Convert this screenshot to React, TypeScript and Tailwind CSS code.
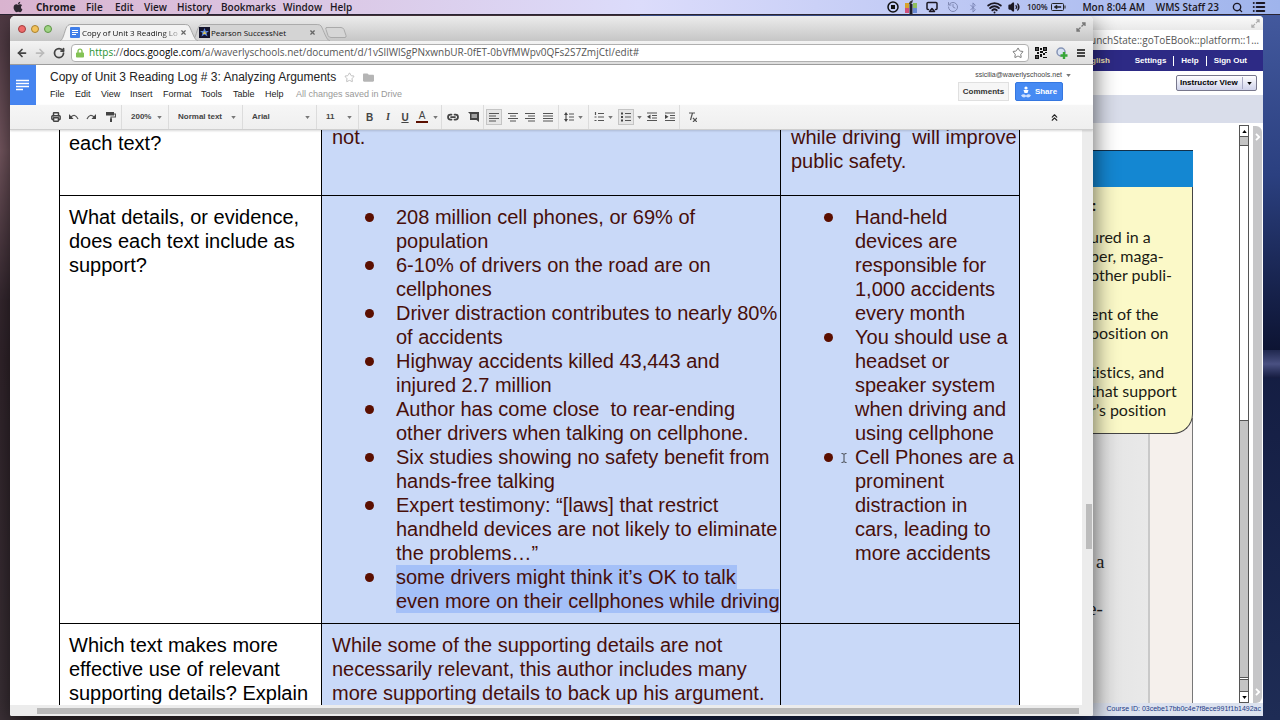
import React from "react";
import {
  Airplay,
  Bluetooth,
  History,
  List,
  Search,
  Volume2,
  Wifi,
  Star,
  Printer,
  Link2,
  ArrowLeft,
  ArrowRight,
  RotateCw,
  ChevronsUp,
  X,
} from "lucide-react";
import { FaApple, FaLock, FaFolder } from "react-icons/fa";

const SYSTEM = "font-['Open_Sans','Noto_Sans',sans-serif]";
const ARIAL = "font-['Liberation_Sans',Arial,sans-serif]";

/* ---------- menu bar ---------- */

const appMenus = [
  { name: "File", width: "w-[29px]" },
  { name: "Edit", width: "w-[29px]" },
  { name: "View", width: "w-[33px]" },
  { name: "History", width: "w-[44px]" },
  { name: "Bookmarks", width: "w-[62px]" },
  { name: "Window", width: "w-[47px]" },
  { name: "Help", width: "w-[30px]" },
];

function MenuBar() {
  return (
    <header
      className={`relative z-20 flex h-[15px] items-center border-b border-[#2a2533] bg-linear-to-r from-[#d9b3cf] via-[#dcdcfb] to-[#9fb4ec] text-[10px] font-semibold leading-[14px] text-[#1b1722] ${SYSTEM}`}
    >
      <FaApple className="ml-3 h-[12px] w-[12px] text-[#2d2730]" />
      <button className="ml-3 w-[50px] text-left font-bold">Chrome</button>
      <nav className="flex flex-1">
        {appMenus.map((m) => (
          <button key={m.name} className={`text-left ${m.width}`}>
            {m.name}
          </button>
        ))}
      </nav>
      <div className="flex items-center pr-[14px]">
        <svg viewBox="0 0 12 12" className="h-3 w-3" aria-hidden="true">
          <circle cx="6" cy="6" r="5" fill="none" stroke="#111" strokeWidth="1.5" />
          <rect x="4" y="4" width="4" height="4" fill="#111" />
        </svg>
        <svg viewBox="0 0 12 14" className="ml-[6px] h-[14px] w-3" aria-hidden="true">
          <rect x="0" y="3" width="4" height="5" fill="#d7a32e" />
          <rect x="0" y="8" width="4" height="5" fill="#d0507c" />
          <rect x="8" y="3" width="4" height="5" fill="#8fbf5e" />
          <rect x="8" y="8" width="4" height="5" fill="#6a8bd4" />
          <path d="M4.500 4h3v10h-3z" fill="#1f1f2a" />
          <path d="M4 4q0-3 4-4-.5 3-2 4z" fill="#333" />
        </svg>
        <Airplay className="ml-2 h-3 w-[14px]" strokeWidth={3} />
        <History className="ml-2 h-3 w-3 text-[#8089b4]" />
        <Bluetooth className="ml-2 h-[11px] w-3 text-[#7a83b4]" />
        <Wifi className="ml-2 h-[15px] w-[15px]" strokeWidth={3} />
        <Volume2 className="ml-[6px] h-3 w-3 fill-[#1b1722]" strokeWidth={2.500} />
        <span className="ml-[7px] w-[24px] text-[8px]">100%</span>
        <svg viewBox="0 0 15 8" className="h-2 w-[15px]" aria-hidden="true">
          <rect x=".5" y=".5" width="12" height="7" rx="1" fill="none" stroke="#222" />
          <path d="M3 4l3-2v1.500h4v1H6V6z" fill="#222" stroke="#222" strokeWidth=".5" />
          <path d="M13.500 2.500h1v3h-1z" fill="#222" />
        </svg>
        <span className="ml-2 w-[71px] whitespace-nowrap text-right">Mon 8:04 AM</span>
        <span className="ml-1 w-[70px] whitespace-nowrap text-right">WMS Staff 23</span>
        <Search className="ml-[13px] h-[11px] w-[11px]" strokeWidth={3} />
        <List className="ml-[9px] h-[14px] w-[14px]" strokeWidth={3.400} />
      </div>
    </header>
  );
}

/* ---------- small shared pieces ---------- */

function Caret({ className = "" }: { className?: string }) {
  return (
    <svg viewBox="0 0 6 4" className={`h-[3px] w-[5px] fill-[#777] ${className}`} aria-hidden="true">
      <path d="M0 0h6L3 4z" />
    </svg>
  );
}

function ExpandArrows({ className }: { className: string }) {
  return (
    <svg viewBox="0 0 10 10" className={className} fill="none" stroke="currentColor" aria-hidden="true">
      <path d="M5.500 4.500L9 1M6 1h3v3M4.500 5.500L1 9M1 6v3h3" strokeWidth="1.300" />
    </svg>
  );
}

/* ---------- e-book window ---------- */

const cardLines = [
  ["ured in a", "per, maga-", "other publi-"],
  ["ent of the", "position on"],
  ["tistics, and", "that support", "r’s position"],
];

function BookWindow() {
  return (
    <section className="absolute bottom-1 right-[17px] top-4 isolate z-0 flex w-[260px] flex-col overflow-hidden rounded-t bg-white">
      <div className="flex h-[14px] items-center justify-end bg-linear-to-b from-[#fafafa] to-[#e9e9e9] pr-[3px]">
        <ExpandArrows className="h-[9px] w-[9px] text-[#aaa]" />
      </div>
      <div className={`flex h-5 items-center justify-end pr-1 text-[10px] text-[#555] ${SYSTEM}`}>
        <span className="whitespace-nowrap">unchState::goToEBook::platform::1…</span>
      </div>
      <nav className={`flex h-[21px] items-center justify-end bg-[#2d2a85] pr-4 text-[8px] font-bold leading-[10px] text-white ${ARIAL}`}>
        <a href="#lang" className="mr-[25px] text-[#f3e5b0]">English</a>
        <a href="#settings" className="border-r border-white pr-[7px]">Settings</a>
        <a href="#help" className="border-r border-white px-[7px]">Help</a>
        <a href="#signout" className="pl-[7px]">Sign Out</a>
      </nav>
      <div className="flex h-6 items-center justify-end pr-[6px]">
        <label className={`relative flex h-4 w-[81px] items-center rounded-xs border border-[#77778c] bg-linear-to-b from-white to-[#cfd2ea] ${ARIAL}`}>
          <span className="sr-only">View</span>
          <select className="h-full w-full appearance-none pl-[3px] text-[8px] font-bold text-black outline-none">
            <option>Instructor View</option>
          </select>
          <span className="pointer-events-none absolute right-0 flex h-3 w-[14px] items-center justify-center border-l border-[#a9abc4]">
            <Caret className="fill-black" />
          </span>
        </label>
      </div>
      <div className="h-7 bg-[#d9ddea]" />
      <div className="flex min-h-0 flex-1">
        <div className="flex min-w-0 flex-1 flex-col pr-[46px] pt-[27px]">
          <div className="relative z-10 h-[37px] border-t border-[#12304a] bg-[#1487d2]" />
          <div className="relative z-10 -mb-4 h-[247px] rounded-br-[20px] border-b border-r border-[#444] bg-[#fbf9c8] pl-[87px] pt-2 font-[Lato,sans-serif] text-[16px] leading-[19px] text-[#1c1c14] [font-variant-ligatures:none]">
            <p className="h-8 pl-[2px] font-bold">:</p>
            {cardLines.map((group) => (
              <p key={group[0]} className="mb-[20px]">
                {group.map((line) => (
                  <span key={line} className="block whitespace-nowrap">{line}</span>
                ))}
              </p>
            ))}
          </div>
          <div className="flex flex-1 border-r border-[#777] bg-[#f5f0ec] pr-[42px]">
            <div className="flex-1 border-r-2 border-[#c9c9c9] bg-linear-to-r from-[#d9d9d9] to-[#e9e9e9] pl-[93px] pt-[132px] font-['Liberation_Serif',serif] text-[19px] leading-[23px] text-[#222]">
              <p>a</p>
              <p className="-ml-2 mt-6">e-</p>
            </div>
          </div>
        </div>
        <div className="mt-[2px] flex w-[10px] flex-col border border-b-0 border-[#555] bg-white">
          <button aria-label="Scroll up" className="flex h-[11px] items-center justify-center border-b border-[#555]">
            <Caret className="rotate-180 fill-black" />
          </button>
          <div className="h-[9px] border-b border-[#555] bg-[#c4c4c4]" />
          <div className="flex-1" />
          <div className="h-[258px] border-y border-[#555] bg-[#c4c4c4]" />
          <div className="mt-px h-[13px] border-y border-[#555] bg-[#c4c4c4]" />
          <button aria-label="Scroll down" className="flex h-[11px] items-center justify-center border-b border-[#555]">
            <Caret className="fill-black" />
          </button>
        </div>
        <aside className="ml-1 mr-px mt-[3px] flex w-[9px] flex-col items-center justify-between rounded-r-md bg-[#c6c6c8] py-[7px] text-white">
          {["Open panel", "Open lower panel"].map((label) => (
            <button key={label} aria-label={label}>
              <svg viewBox="0 0 6 8" className="h-2 w-[6px]" fill="none" stroke="#fff" strokeWidth="1.800" aria-hidden="true">
                <path d="M1 .8L4.200 4 1 7.200" />
              </svg>
            </button>
          ))}
        </aside>
      </div>
      <footer className={`h-[13px] whitespace-nowrap bg-[#dce2ef] pr-[2px] text-right text-[7px] leading-[11px] text-[#223a86] ${ARIAL}`}>
        Course ID: 03cebe17bb0c4e7f8ece991f1b1492ac
      </footer>
    </section>
  );
}

/* ---------- browser chrome ---------- */

function TabShape({ active }: { active: boolean }) {
  return (
    <svg viewBox="0 0 140 17" preserveAspectRatio="none" className="absolute inset-0 -z-10 h-full w-full" aria-hidden="true">
      <path
        d="M0 17C4 16 5 3 8 1.500Q9 .5 11 .5H127Q130 .5 131 2C134 7 136 16 140 17Z"
        fill={active ? "#f3f3f3" : "#d4d4d4"}
        stroke={active ? "#a6a6a6" : "#aaa"}
      />
    </svg>
  );
}

function DocsGlyph() {
  return (
    <svg viewBox="0 0 10 11" className="h-[11px] w-[10px] shrink-0" aria-hidden="true">
      <rect width="10" height="11" rx="1" fill="#3f7de8" />
      <path d="M2 3.500h6M2 5.500h6M2 7.500h4" stroke="#fff" />
    </svg>
  );
}

function TabStrip() {
  return (
    <div className={`flex h-[25px] items-end bg-linear-to-b from-[#ececec] to-[#c6c6c6] pl-2 text-[8px] text-[#111] ${SYSTEM}`}>
      <div className="mb-[8px] flex w-10 gap-[5px]">
        <button aria-label="Close window" className="size-2 rounded-full border border-[#a23c3c] bg-[#ee6a6a]" />
        <button aria-label="Minimise window" className="size-2 rounded-full border border-[#a9802e] bg-[#f3c35c]" />
        <button aria-label="Zoom window" className="size-2 rounded-full border border-[#5e9446] bg-[#9fd483]" />
      </div>
      <div className="relative isolate z-10 ml-[2px] flex h-[17px] w-[138px] items-center pl-[10px]">
        <TabShape active />
        <DocsGlyph />
        <span className="ml-[2px] w-[98px] whitespace-nowrap bg-linear-to-r from-[#111] from-80% to-[#ccc] bg-clip-text text-transparent">
          Copy of Unit 3 Reading Lo
        </span>
        <button aria-label="Close tab"><X className="h-[7px] w-[7px] text-[#666]" strokeWidth={4} /></button>
      </div>
      <div className="relative isolate -ml-[6px] flex h-[17px] w-[138px] items-center pl-[7px]">
        <TabShape active={false} />
        <svg viewBox="0 0 11 11" className="h-[11px] w-[11px] shrink-0" aria-hidden="true">
          <rect width="11" height="11" fill="#14142c" />
          <path d="M5.500 1l1.300 3H10L7.500 6l1 3.500-3-2-3 2 1-3.500L1 4h3.200z" fill="#5b83d8" />
          <path d="M5.500 4l2 3h-4z" fill="#d6c65a" />
        </svg>
        <span className="ml-[1px] w-[98px] whitespace-nowrap">Pearson SuccessNet</span>
        <button aria-label="Close tab"><X className="h-[7px] w-[7px] text-[#666]" strokeWidth={4} /></button>
      </div>
      <button aria-label="New tab" className="mb-[3px] -ml-[5px]">
        <svg viewBox="0 0 22 11" className="h-[11px] w-[22px]" aria-hidden="true">
          <path d="M1 .5h15q2 0 3 2l2 6q.5 2-1 2H6q-2 0-3-2l-2-6Q0 .5 2 .5z" fill="#d6d6d6" stroke="#aaa" />
        </svg>
      </button>
      <div className="mb-[9px] flex flex-1 justify-end pr-[7px]">
        <ExpandArrows className="h-[10px] w-[10px] text-[#777]" />
      </div>
    </div>
  );
}

function AddressBar() {
  return (
    <div className="flex h-6 items-center border-b border-[#9c9c9c] bg-linear-to-b from-[#f3f3f3] to-[#dedede] pl-[6px] pr-2">
      <button aria-label="Back"><ArrowLeft className="h-3 w-3 text-[#444]" strokeWidth={3.500} /></button>
      <button aria-label="Forward" className="ml-[6px]"><ArrowRight className="h-3 w-3 text-[#bbb]" strokeWidth={3.500} /></button>
      <button aria-label="Reload" className="ml-[7px]"><RotateCw className="h-3 w-3 text-[#444]" strokeWidth={3.500} /></button>
      <label className={`ml-[6px] flex h-[18px] flex-1 items-center rounded-sm border border-[#b0b0b0] bg-white px-1 text-[10px] text-[#555] ${SYSTEM}`}>
        <FaLock className="mr-[5px] h-[10px] w-2 text-[#83c255]" />
        <span className="text-[#2a9330]">https</span>
        <span>://</span>
        <span className="text-black">docs.google.com</span>
        <input
          aria-label="Address"
          className="min-w-0 flex-1 outline-none"
          defaultValue="/a/waverlyschools.net/document/d/1vSlIWlSgPNxwnbUR-0fET-0bVfMWpv0QFs2S7ZmjCtI/edit#"
        />
        <Star className="h-3 w-3 text-[#777]" />
      </label>
      <svg viewBox="0 0 12 12" className="ml-[6px] h-3 w-3" fill="#111" aria-label="QR code" role="img">
        <path d="M0 0h4v4H0zM8 0h4v4H8zM0 8h4v4H0zM5 1h2v2H5zM5 4h3v2H5zM2 5h2v2H2zM8 6h2v2H8zM5 7h2v3H5zM8 10h4v1H8zM10 5h2v1h-2z" />
        <path d="M1.500 1.500h1v1h-1zM9.500 1.500h1v1h-1zM1.500 9.500h1v1h-1z" fill="#fff" />
      </svg>
      <svg viewBox="0 0 12 12" className="ml-[9px] h-3 w-3" aria-label="Add extension" role="img">
        <circle cx="5" cy="5" r="4" fill="#d9e3f3" stroke="#8593b5" strokeWidth="1.500" />
        <path d="M8 5v7M4.500 8.500h7" stroke="#37a637" strokeWidth="2.400" />
      </svg>
      <button aria-label="Browser menu" className="ml-[9px] flex w-2 flex-col gap-px">
        <span className="h-[2px] bg-[#444]" />
        <span className="h-[2px] bg-[#444]" />
        <span className="h-[2px] bg-[#444]" />
      </button>
    </div>
  );
}

/* ---------- document header ---------- */

const docMenus = [
  { name: "File", width: "w-[25px]" },
  { name: "Edit", width: "w-[26px]" },
  { name: "View", width: "w-[29px]" },
  { name: "Insert", width: "w-[33px]" },
  { name: "Format", width: "w-[38px]" },
  { name: "Tools", width: "w-[32px]" },
  { name: "Table", width: "w-[32px]" },
  { name: "Help", width: "w-[31px]" },
];

function DocHeader() {
  return (
    <div className={`flex h-10 bg-white ${ARIAL}`}>
      <a href="#docs" aria-label="Docs home" className="flex w-[26px] items-center justify-center bg-[#4584f0]">
        <svg viewBox="0 0 14 12" className="h-3 w-[14px]" stroke="#fff" strokeWidth="1.500" aria-hidden="true">
          <path d="M0 1.500h13M0 4.500h13M0 7.500h13M0 10.500h7" />
        </svg>
      </a>
      <div className="flex-1 pl-[14px] pt-1">
        <div className="flex items-center">
          <h1 className="text-[12px] leading-4 text-[#222]">Copy of Unit 3 Reading Log # 3: Analyzing Arguments</h1>
          <button aria-label="Star document" className="ml-2"><Star className="h-[11px] w-[11px] text-[#bbb]" /></button>
          <button aria-label="Move to folder" className="ml-2"><FaFolder className="h-[11px] w-[11px] text-[#b5b5b5]" /></button>
        </div>
        <div className="mt-[3px] flex text-[9px] leading-3 text-[#222]">
          {docMenus.map((m) => (
            <button key={m.name} className={`text-left ${m.width}`}>{m.name}</button>
          ))}
          <span className="whitespace-nowrap text-[#999]">All changes saved in Drive</span>
        </div>
      </div>
      <div className="flex flex-col items-end pr-[22px] pt-[5px] text-[8px]">
        <button className="flex items-center gap-1 text-[7px] leading-[10px] text-[#444]">
          ssicilia@waverlyschools.net <Caret />
        </button>
        <div className="mr-2 mt-[2px] flex gap-[6px] font-bold">
          <button className="h-[19px] w-[51px] border border-[#e0e0e0] bg-[#f6f6f6] text-[#333]">Comments</button>
          <button className="flex h-[19px] w-12 items-center justify-center gap-1 rounded-xs border border-[#3577e0] bg-[#468af3] text-white">
            <svg viewBox="0 0 10 12" className="h-3 w-[10px]" fill="#fff" aria-hidden="true">
              <circle cx="5" cy="2" r="1.600" />
              <path d="M2.500 4h5l-1 3h-3z" />
              <path d="M0 9.500q2.500-2.500 5 0 2.500-2.500 5 0-2.500 3.500-5 1-2.500 2.500-5-1z" fill="#cfe0ff" />
            </svg>
            Share
          </button>
        </div>
      </div>
    </div>
  );
}

/* ---------- toolbar ---------- */

function ToolSelect({ label, value, width }: { label: string; value: string; width: string }) {
  return (
    <label className={`relative flex h-full items-center border-l border-[#dcdcdc] ${width}`}>
      <span className="sr-only">{label}</span>
      <select className="w-full appearance-none pl-[9px] text-[8px] font-bold text-[#444] outline-none">
        <option>{value}</option>
      </select>
      <Caret className="pointer-events-none absolute right-[6px]" />
    </label>
  );
}

function Tool({ label, width, divider, pressed, children }: {
  label: string;
  width: string;
  divider?: boolean;
  pressed?: boolean;
  children: React.ReactNode;
}) {
  return (
    <button
      aria-label={label}
      aria-pressed={pressed}
      className={`flex h-full items-center justify-center text-[#444] ${width} ${divider ? "border-l border-[#dcdcdc]" : ""}`}
    >
      {pressed ? (
        <span className="flex h-4 w-4 items-center justify-center border border-[#c4c4c4] bg-[#e6e6e6]">{children}</span>
      ) : (
        children
      )}
    </button>
  );
}

function Glyph({ d, extra }: { d: string; extra?: string }) {
  return (
    <svg viewBox="0 0 10 10" className="h-[10px] w-[10px] shrink-0" stroke="#555" strokeWidth="1.200" fill="none" aria-hidden="true">
      <path d={d} />
      {extra ? <path d={extra} fill="#444" stroke="none" /> : null}
    </svg>
  );
}

function Toolbar() {
  return (
    <div className={`relative z-10 flex h-[25px] items-center border-b border-[#cfcfcf] bg-linear-to-b from-[#f6f6f6] to-[#efefef] pl-[37px] text-[10px] shadow-[0_1px_2px_rgba(0,0,0,0.15)] ${ARIAL}`}>
      <Tool label="Print" width="w-[18px]"><Printer className="h-[10px] w-[10px]" strokeWidth={3.500} /></Tool>
      <Tool label="Undo" width="w-[17px]"><Glyph d="M2 5q4-4 7 2" extra="M0 2v5h4.500z" /></Tool>
      <Tool label="Redo" width="w-[18px]"><Glyph d="M8 5q-4-4-7 2" extra="M10 2v5H5.500z" /></Tool>
      <Tool label="Paint format" width="w-[21px]"><Glyph d="M8 2h1.500v3H5v2" extra="M0 0h8v3.500H0zM4 6.500h2V10H4z" /></Tool>
      <ToolSelect label="Zoom" value="200%" width="w-[47px]" />
      <ToolSelect label="Style" value="Normal text" width="w-[74px]" />
      <ToolSelect label="Font" value="Arial" width="w-[74px]" />
      <ToolSelect label="Font size" value="11" width="w-[42px]" />
      <Tool label="Bold" width="w-[22px]" divider><b>B</b></Tool>
      <Tool label="Italic" width="w-[16px]"><b className="font-serif italic">I</b></Tool>
      <Tool label="Underline" width="w-[18px]"><b className="underline">U</b></Tool>
      <Tool label="Text colour" width="w-[16px]"><span className="border-b-2 border-[#5b0f00] px-[3px] leading-[10px]">A</span></Tool>
      <Tool label="Text colour options" width="w-[11px]"><Caret /></Tool>
      <Tool label="Insert link" width="w-[22px]" divider><Link2 className="h-3 w-3" strokeWidth={3.500} /></Tool>
      <Tool label="Insert comment" width="w-5">
        <svg viewBox="0 0 11 10" className="h-[10px] w-[11px]" aria-hidden="true">
          <path d="M0 0h11v10L8.500 8H2V2z" fill="#444" />
          <path d="M3.500 3h5.500M3.500 5h5.500" stroke="#fff" />
        </svg>
      </Tool>
      <Tool label="Align left" width="w-[21px]" divider pressed><Glyph d="M0 1.500h10M0 4h7M0 6.500h10M0 9h7" /></Tool>
      <Tool label="Align centre" width="w-[17px]"><Glyph d="M0 1.500h10M2 4h6M0 6.500h10M2 9h6" /></Tool>
      <Tool label="Align right" width="w-[17px]"><Glyph d="M0 1.500h10M3 4h7M0 6.500h10M3 9h7" /></Tool>
      <Tool label="Justify" width="w-[20px]"><Glyph d="M0 1.500h10M0 4h10M0 6.500h10M0 9h10" /></Tool>
      <Tool label="Line spacing" width="w-[30px]" divider>
        <Glyph d="M2 2v6M5 2h5M5 5h5M5 8h5" extra="M0 3l2-3 2 3zM0 7l2 3 2-3z" />
        <Caret className="ml-1" />
      </Tool>
      <Tool label="Numbered list" width="w-[29px]" divider>
        <Glyph d="M4 1.500h6M4 5h6M4 8.500h6M1.500 0v3M.5 5h2M.5 8.500h2" />
        <Caret className="ml-1" />
      </Tool>
      <Tool label="Bulleted list" width="w-[18px]" pressed><Glyph d="M4 1.500h6M4 5h6M4 8.500h6" extra="M0 .5h2v2H0zM0 4h2v2H0zM0 7.500h2v2H0z" /></Tool>
      <Tool label="Bulleted list options" width="w-[8px]"><Caret /></Tool>
      <Tool label="Decrease indent" width="w-[18px]"><Glyph d="M0 1h10M5 3.500h5M5 6h5M0 8.500h10" extra="M3.500 2.500v4.500L0 4.750z" /></Tool>
      <Tool label="Increase indent" width="w-[18px]"><Glyph d="M0 1h10M5 3.500h5M5 6h5M0 8.500h10" extra="M0 2.500v4.500l3.500-2.250z" /></Tool>
      <Tool label="Clear formatting" width="w-[24px]" divider><Glyph d="M2 1h6M5.500 1L3.500 8M6 6l4 4M10 6l-4 4" /></Tool>
      <div className="flex flex-1 justify-end pr-[33px]">
        <button aria-label="Hide menus"><ChevronsUp className="h-[11px] w-[11px] text-[#222]" strokeWidth={2.500} /></button>
      </div>
    </div>
  );
}

/* ---------- document ---------- */

function Lines({ lines }: { lines: string[] }) {
  return (
    <>
      {lines.map((line) => (
        <span key={line} className="block whitespace-pre">{line}</span>
      ))}
    </>
  );
}

function Bullets({ items, children }: { items: string[][]; children?: React.ReactNode }) {
  return (
    <ul className="pl-16">
      {items.map((item) => (
        <BulletItem key={item[0]}><Lines lines={item} /></BulletItem>
      ))}
      {children}
    </ul>
  );
}

function BulletItem({ children }: { children: React.ReactNode }) {
  return (
    <li className="-ml-[31px] flex">
      <span className="mr-[22px] mt-2 size-[9px] shrink-0 rounded-full bg-[#5b0f00]" />
      <div>{children}</div>
    </li>
  );
}

const carEvidence = [
  ["208 million cell phones, or 69% of", "population"],
  ["6-10% of drivers on the road are on", "cellphones"],
  ["Driver distraction contributes to nearly 80%", "of accidents"],
  ["Highway accidents killed 43,443 and", "injured 2.7 million"],
  ["Author has come close  to rear-ending", "other drivers when talking on cellphone."],
  ["Six studies showing no safety benefit from", "hands-free talking"],
  ["Expert testimony: “[laws] that restrict", "handheld devices are not likely to eliminate", "the problems…”"],
];

const lawEvidence = [
  ["Hand-held", "devices are", "responsible for", "1,000 accidents", "every month"],
  ["You should use a", "headset or", "speaker system", "when driving and", "using cellphone"],
  ["Cell Phones are a", "prominent", "distraction in", "cars, leading to", "more accidents"],
];

const cell = "border border-black pl-[9px] align-top";
const selectedCell = "border border-black bg-[#c9d9f8] pl-[10px] align-top text-[#480f0a]";

function DocumentTable() {
  return (
    <table className={`-mt-[6px] ml-[49px] w-[960px] table-fixed border-collapse text-[20px] leading-6 text-black ${ARIAL}`}>
      <colgroup>
        <col className="w-[262px]" />
        <col className="w-[459px]" />
        <col className="w-[239px]" />
      </colgroup>
      <tbody>
        <tr className="h-[71px]">
          <td className={`${cell} pt-[6px]`}>each text?</td>
          <td className={selectedCell}>not.</td>
          <td className={selectedCell}><Lines lines={["while driving  will improve", "public safety."]} /></td>
        </tr>
        <tr>
          <td className={`${cell} pt-[9px]`}>
            <Lines lines={["What details, or evidence,", "does each text include as", "support?"]} />
          </td>
          <td className={`${selectedCell} pb-[10px] pt-[9px]`}>
            <Bullets items={carEvidence}>
              <BulletItem>
                <mark className="block w-[341px] whitespace-nowrap bg-[#a4c0f8] text-inherit">some drivers might think it’s OK to talk</mark>
                <mark className="block w-[383px] whitespace-nowrap bg-[#a4c0f8] text-inherit">even more on their cellphones while driving</mark>
              </BulletItem>
            </Bullets>
          </td>
          <td className={`${selectedCell} pt-[9px]`}><Bullets items={lawEvidence} /></td>
        </tr>
        <tr>
          <td className={`${cell} pt-[9px]`}>
            <Lines lines={["Which text makes more", "effective use of relevant", "supporting details? Explain"]} />
          </td>
          <td className={`${selectedCell} pb-5 pt-[9px]`}>
            <Lines lines={["While some of the supporting details are not", "necessarily relevant, this author includes many", "more supporting details to back up his argument."]} />
          </td>
          <td className={selectedCell} />
        </tr>
      </tbody>
    </table>
  );
}

function BrowserWindow() {
  return (
    <main className="absolute bottom-1 left-[10px] right-[187px] top-4 z-10 flex flex-col overflow-hidden rounded-b-xs rounded-t-[5px] bg-white shadow-[0_8px_24px_rgba(0,0,0,0.65)]">
      <TabStrip />
      <AddressBar />
      <DocHeader />
      <Toolbar />
      <div className="flex min-h-0 flex-1">
        <div className="min-w-0 flex-1 overflow-hidden bg-white">
          <DocumentTable />
        </div>
        <div className="flex w-[11px] justify-end bg-[#ececec] pr-px pt-[374px]">
          <div className="h-[45px] w-[6px] bg-[#bcbcbc]" />
        </div>
      </div>
      <div className="flex h-[11px] items-center bg-[#ececec] pl-[27px] pr-[14px]">
        <div className="h-[6px] flex-1 bg-[#b9b9b9]" />
      </div>
      <svg viewBox="0 0 6 10" className="absolute left-[831px] top-[437px] h-[10px] w-[6px]" fill="none" stroke="#222" aria-hidden="true">
        <path d="M.5 .5Q2.500 .5 3 1.500 3.500 .5 5.500 .5M.5 9.500Q2.500 9.500 3 8.500 3.500 9.500 5.500 9.500M3 1.500v7" strokeWidth=".8" />
      </svg>
    </main>
  );
}

export default function App() {
  return (
    <div className="relative h-screen w-full overflow-hidden bg-[#17151f]">
      <div className="absolute inset-y-0 left-0 w-1/2 bg-linear-to-b from-[#4f3a44] via-[#33262d] to-[#3d3238]">
        <div className="h-[300px] bg-linear-to-b from-[#4a3640] via-[#7a5b64] to-[#382a32]" />
      </div>
      <div className="absolute inset-y-0 right-0 w-1/2 bg-linear-to-b from-[#0e1534] via-[#141d42] to-[#1e2c55]">
        <div className="h-[350px] bg-linear-to-b from-[#455ba0] via-[#2b4080] to-[#0d1433]" />
        <div className="h-7 bg-linear-to-b from-[#20284f] via-[#4a5182] to-[#151c40]" />
      </div>
      <BookWindow />
      <BrowserWindow />
      <MenuBar />
    </div>
  );
}
